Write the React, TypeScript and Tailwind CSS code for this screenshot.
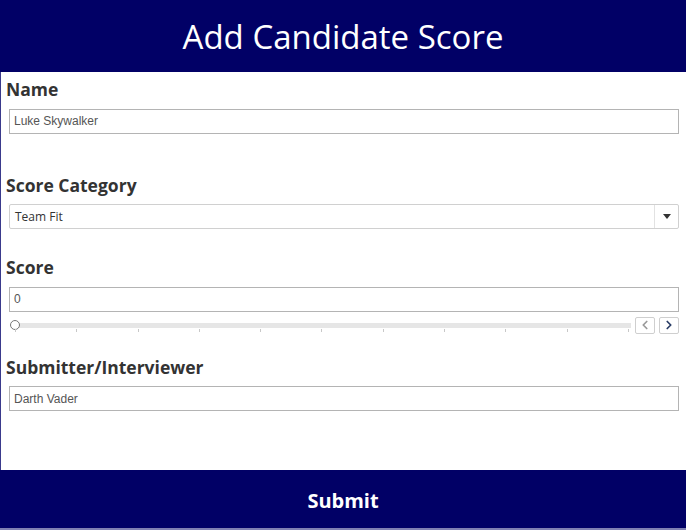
import { ChevronLeft, ChevronRight } from 'lucide-react'

const ticks = Array.from({ length: 11 }, (_, i) => i)

function Label({ children }: { children: React.ReactNode }) {
  return <div className="text-[17.5px] font-bold leading-none text-[#333]">{children}</div>
}

function TextBox({ value }: { value: string }) {
  return (
    <div className="flex h-[25px] items-center border border-[#b4b4b4] px-[4px] font-['Liberation_Sans',sans-serif] text-[12px] text-[#555]">
      {value}
    </div>
  )
}

export default function App() {
  return (
    <div className="flex h-[530px] w-[686px] flex-col bg-white font-['Open_Sans',sans-serif]">
      <header className="flex h-[72px] items-center justify-center bg-[#010066] pt-[2px] text-[33px] text-white">
        Add Candidate Score
      </header>

      <main className="flex flex-1 flex-col border-l border-[#3a3a8c] pl-[5px] pr-[7px]">
        <div className="mt-[9px]">
          <Label>Name</Label>
        </div>
        <div className="ml-[3px] mt-[10px]">
          <TextBox value="Luke Skywalker" />
        </div>

        <div className="mt-[43px]">
          <Label>Score Category</Label>
        </div>
        <div className="ml-[3px] mt-[10px] flex h-[25px] items-center rounded-[2px] border border-[#d0d0d0] text-[12px] text-[#333]">
          <span className="flex-1 pl-[5px]">Team Fit</span>
          <span className="flex h-full w-[24px] items-center justify-center border-l border-[#e2e2e2]">
            <svg width="8" height="5" viewBox="0 0 8 5">
              <path d="M0 0h8L4 5z" fill="#333" />
            </svg>
          </span>
        </div>

        <div className="mt-[30px]">
          <Label>Score</Label>
        </div>
        <div className="ml-[3px] mt-[10px]">
          <TextBox value="0" />
        </div>
        <div className="ml-[3px] mt-[5px] flex items-start gap-[4px]">
          <div className="relative mt-[3px] h-[12px] flex-1">
            <div className="absolute left-[6px] right-0 top-[3px] h-[5px] bg-[#e6e6e6]" />
            <div className="absolute left-[1px] top-0 h-[10px] w-[10px] rounded-full border border-[#777] bg-white" />
            <div className="absolute left-[6px] right-[2px] top-[9px] flex justify-between">
              {ticks.map((t) => (
                <span key={t} className="h-[3px] w-px bg-[#c8c8c8]" />
              ))}
            </div>
          </div>
          <button className="flex h-[17px] w-[20px] items-center justify-center rounded-[2px] border border-[#cfcfcf] text-[#9a9a9a]">
            <ChevronLeft size={14} strokeWidth={3} />
          </button>
          <button className="flex h-[17px] w-[20px] items-center justify-center rounded-[2px] border border-[#cfcfcf] text-[#2a3d66]">
            <ChevronRight size={14} strokeWidth={3} />
          </button>
        </div>

        <div className="mt-[25px]">
          <Label>Submitter/Interviewer</Label>
        </div>
        <div className="ml-[3px] mt-[10px]">
          <TextBox value="Darth Vader" />
        </div>
      </main>

      <button className="flex h-[60px] items-center justify-center border-b-2 border-[#8080b3] bg-[#010066] pt-[3px] text-[20px] font-bold text-white">
        Submit
      </button>
    </div>
  )
}
